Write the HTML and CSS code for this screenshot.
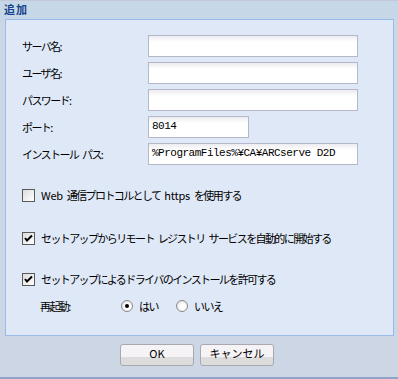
FILE: index.html
```html
<!DOCTYPE html>
<html lang="ja">
<head>
    <meta charset="UTF-8">
    <title>追加</title>
    <link rel="stylesheet" href="styles.css">
</head>
<body>

    <div class="window">
        <div class="header">追加</div>

        <div class="panel">
            <div class="form">
                <div class="row">
                    <label>サーバ名:</label>
                    <div class="field"></div>
                </div>
                <div class="row">
                    <label>ユーザ名:</label>
                    <div class="field"></div>
                </div>
                <div class="row">
                    <label>パスワード:</label>
                    <div class="field"></div>
                </div>
                <div class="row">
                    <label>ポート:</label>
                    <div class="field short">8014</div>
                </div>
                <div class="row">
                    <label>インストール パス:</label>
                    <div class="field">%ProgramFiles%¥CA¥ARCserve D2D</div>
                </div>
            </div>

            <div class="check first">
                <span class="box"></span>
                <span><span class="latin">Web</span> 通信プロトコルとして <span class="latin">https</span> を使用する</span>
            </div>
            <div class="check second">
                <span class="box checked">
                    <svg width="9" height="9" viewBox="0 0 9 9"><path d="M1 4 L3 6.5 L8 1.5" fill="none" stroke="#000" stroke-width="2"/></svg>
                </span>
                <span>セットアップからリモート レジストリ サービスを自動的に開始する</span>
            </div>
            <div class="check third">
                <span class="box checked">
                    <svg width="9" height="9" viewBox="0 0 9 9"><path d="M1 4 L3 6.5 L8 1.5" fill="none" stroke="#000" stroke-width="2"/></svg>
                </span>
                <span>セットアップによるドライバのインストールを許可する</span>
            </div>

            <div class="reboot">
                <span class="reboot-label">再起動:</span>
                <span class="radio on"></span>
                <span class="radio-text">はい</span>
                <span class="radio"></span>
                <span class="radio-text">いいえ</span>
            </div>
        </div>

        <div class="footer">
            <div class="button">OK</div>
            <div class="button">キャンセル</div>
        </div>
    </div>

</body>
</html>
```

FILE: styles.css
```css
/* dialog fills the whole window */
body, html {
    margin: 0;
    font-family: "Noto Sans CJK JP", sans-serif;
    font-size: 11px;
    letter-spacing: -1.6px;
    word-spacing: 3px;
    color: #000;
}

.latin {
    letter-spacing: -0.2px;
}

.window {
    width: 398px;
    height: 379px;
    box-sizing: border-box;
    background-color: #cdd6e5;
    border-top: 1px solid #c4c8d8;
    border-bottom: 2px solid #8fa4c4;
    display: flex;
    flex-direction: column;
}

.header {
    height: 18px;
    line-height: 17px;
    padding-left: 4px;
    background-color: #c6d7e8;
    color: #15428b;
    font-weight: bold;
    font-size: 11px;
    letter-spacing: 1px;
}

.panel {
    margin: 0 4px 0 5px;
    height: 317px;
    box-sizing: border-box;
    border: 1px solid #99bbe8;
    background-color: #dfe8f6;
    padding: 15px 0 0 16px;
}

.form {
    display: flex;
    flex-direction: column;
    gap: 5px;
}

.row {
    display: flex;
    align-items: center;
    height: 22px;
}

.row label {
    width: 126px;
}

.field {
    width: 210px;
    height: 22px;
    box-sizing: border-box;
    border: 1px solid #b5b8c8;
    background: linear-gradient(#ececf0, #fff 6px);
    padding-left: 3px;
    line-height: 19px;
    font-family: "Liberation Mono", monospace;
    font-size: 11px;
    letter-spacing: -0.5px;
    word-spacing: 0;
}

.field.short {
    width: 101px;
}

.check {
    display: flex;
    align-items: center;
    height: 16px;
    gap: 6px;
}

.check.first {
    margin-top: 22px;
}

.check.second {
    margin-top: 27px;
}

.check.third {
    margin-top: 25px;
}

.box {
    width: 13px;
    height: 13px;
    box-sizing: border-box;
    border: 1px solid #5a5a5a;
    background: linear-gradient(135deg, #dcdcdc, #fff);
    display: flex;
    align-items: center;
    justify-content: center;
}

.reboot {
    display: flex;
    align-items: center;
    height: 16px;
    margin-top: 11px;
    padding-left: 18px;
}

.reboot-label {
    width: 81px;
}

.radio {
    width: 12px;
    height: 12px;
    box-sizing: border-box;
    border-radius: 50%;
    border: 1px solid #8a8a8a;
    background: radial-gradient(circle at 60% 60%, #fff 30%, #d8d8d8);
    position: relative;
}

.radio.on::after {
    content: "";
    position: absolute;
    left: 3px;
    top: 3px;
    width: 4px;
    height: 4px;
    border-radius: 50%;
    background-color: #000;
}

.radio-text {
    margin-left: 6px;
    width: 37px;
}

.footer {
    display: flex;
    justify-content: center;
    gap: 6px;
    padding-top: 8px;
    padding-right: 4px;
}

.button {
    width: 74px;
    height: 22px;
    box-sizing: border-box;
    border: 1px solid #a8a8b0;
    border-radius: 3px;
    background: linear-gradient(#f5f3f5 0, #f5f3f5 12px, #dcdcdc 12px, #dcdcdc 100%);
    text-align: center;
    line-height: 17px;
    font-size: 11px;
    letter-spacing: 0;
    word-spacing: 0;
}
```
